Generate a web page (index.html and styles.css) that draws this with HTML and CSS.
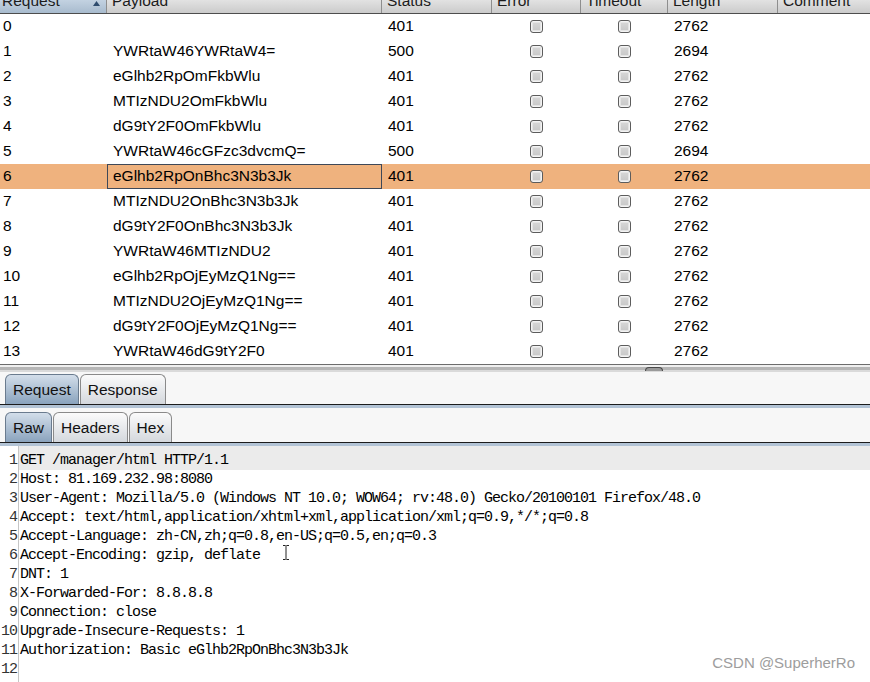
FILE: index.html
```html
<!DOCTYPE html>
<html>
<head>
<meta charset="utf-8">
<link rel="stylesheet" href="styles.css">
</head>
<body>
<div class="results">
  <div class="thead">
    <div class="th sorted first"><span class="th-label">Request</span><svg class="sort-arrow" width="7" height="5" viewBox="0 0 7 5"><path d="M0 5 L3.5 0 L7 5 Z" fill="#2f4c6e"/></svg></div>
    <div class="th"><span class="th-label">Payload</span></div>
    <div class="th"><span class="th-label">Status</span></div>
    <div class="th"><span class="th-label">Error</span></div>
    <div class="th"><span class="th-label">Timeout</span></div>
    <div class="th"><span class="th-label">Length</span></div>
    <div class="th last"><span class="th-label">Comment</span></div>
  </div>
  <div class="tbody">
    <div class="row"><div class="cell num">0</div><div class="cell"></div><div class="cell">401</div><div class="cell chk"><span class="box"></span></div><div class="cell chk"><span class="box"></span></div><div class="cell">2762</div><div class="cell"></div></div>
    <div class="row"><div class="cell num">1</div><div class="cell">YWRtaW46YWRtaW4=</div><div class="cell">500</div><div class="cell chk"><span class="box"></span></div><div class="cell chk"><span class="box"></span></div><div class="cell">2694</div><div class="cell"></div></div>
    <div class="row"><div class="cell num">2</div><div class="cell">eGlhb2RpOmFkbWlu</div><div class="cell">401</div><div class="cell chk"><span class="box"></span></div><div class="cell chk"><span class="box"></span></div><div class="cell">2762</div><div class="cell"></div></div>
    <div class="row"><div class="cell num">3</div><div class="cell">MTIzNDU2OmFkbWlu</div><div class="cell">401</div><div class="cell chk"><span class="box"></span></div><div class="cell chk"><span class="box"></span></div><div class="cell">2762</div><div class="cell"></div></div>
    <div class="row"><div class="cell num">4</div><div class="cell">dG9tY2F0OmFkbWlu</div><div class="cell">401</div><div class="cell chk"><span class="box"></span></div><div class="cell chk"><span class="box"></span></div><div class="cell">2762</div><div class="cell"></div></div>
    <div class="row"><div class="cell num">5</div><div class="cell">YWRtaW46cGFzc3dvcmQ=</div><div class="cell">500</div><div class="cell chk"><span class="box"></span></div><div class="cell chk"><span class="box"></span></div><div class="cell">2694</div><div class="cell"></div></div>
    <div class="row selected"><div class="cell num">6</div><div class="cell focus">eGlhb2RpOnBhc3N3b3Jk</div><div class="cell">401</div><div class="cell chk"><span class="box"></span></div><div class="cell chk"><span class="box"></span></div><div class="cell">2762</div><div class="cell"></div></div>
    <div class="row"><div class="cell num">7</div><div class="cell">MTIzNDU2OnBhc3N3b3Jk</div><div class="cell">401</div><div class="cell chk"><span class="box"></span></div><div class="cell chk"><span class="box"></span></div><div class="cell">2762</div><div class="cell"></div></div>
    <div class="row"><div class="cell num">8</div><div class="cell">dG9tY2F0OnBhc3N3b3Jk</div><div class="cell">401</div><div class="cell chk"><span class="box"></span></div><div class="cell chk"><span class="box"></span></div><div class="cell">2762</div><div class="cell"></div></div>
    <div class="row"><div class="cell num">9</div><div class="cell">YWRtaW46MTIzNDU2</div><div class="cell">401</div><div class="cell chk"><span class="box"></span></div><div class="cell chk"><span class="box"></span></div><div class="cell">2762</div><div class="cell"></div></div>
    <div class="row"><div class="cell num">10</div><div class="cell">eGlhb2RpOjEyMzQ1Ng==</div><div class="cell">401</div><div class="cell chk"><span class="box"></span></div><div class="cell chk"><span class="box"></span></div><div class="cell">2762</div><div class="cell"></div></div>
    <div class="row"><div class="cell num">11</div><div class="cell">MTIzNDU2OjEyMzQ1Ng==</div><div class="cell">401</div><div class="cell chk"><span class="box"></span></div><div class="cell chk"><span class="box"></span></div><div class="cell">2762</div><div class="cell"></div></div>
    <div class="row"><div class="cell num">12</div><div class="cell">dG9tY2F0OjEyMzQ1Ng==</div><div class="cell">401</div><div class="cell chk"><span class="box"></span></div><div class="cell chk"><span class="box"></span></div><div class="cell">2762</div><div class="cell"></div></div>
    <div class="row"><div class="cell num">13</div><div class="cell">YWRtaW46dG9tY2F0</div><div class="cell">401</div><div class="cell chk"><span class="box"></span></div><div class="cell chk"><span class="box"></span></div><div class="cell">2762</div><div class="cell"></div></div>
  </div>
</div>
<div class="splitter"><span class="grip"></span></div>
<div class="tabpanel">
  <div class="tabbar">
    <div class="tab active">Request</div>
    <div class="tab">Response</div>
  </div>
  <div class="tabrule"></div>
  <div class="tabbar second">
    <div class="tab active">Raw</div>
    <div class="tab">Headers</div>
    <div class="tab">Hex</div>
  </div>
  <div class="tabrule"></div>
</div>
<div class="editor">
  <div class="gutter">
    <div>1</div><div>2</div><div>3</div><div>4</div><div>5</div><div>6</div><div>7</div><div>8</div><div>9</div><div>10</div><div>11</div><div>12</div><div>13</div>
  </div>
  <div class="code">
    <div class="line current">GET /manager/html HTTP/1.1</div>
    <div class="line">Host: 81.169.232.98:8080</div>
    <div class="line">User-Agent: Mozilla/5.0 (Windows NT 10.0; WOW64; rv:48.0) Gecko/20100101 Firefox/48.0</div>
    <div class="line">Accept: text/html,application/xhtml+xml,application/xml;q=0.9,*/*;q=0.8</div>
    <div class="line">Accept-Language: zh-CN,zh;q=0.8,en-US;q=0.5,en;q=0.3</div>
    <div class="line">Accept-Encoding: gzip, deflate</div>
    <div class="line">DNT: 1</div>
    <div class="line">X-Forwarded-For: 8.8.8.8</div>
    <div class="line">Connection: close</div>
    <div class="line">Upgrade-Insecure-Requests: 1</div>
    <div class="line">Authorization: Basic eGlhb2RpOnBhc3N3b3Jk</div>
    <div class="line"></div>
    <div class="line"></div>
  </div>
</div>
<svg class="ibeam" width="8" height="17" viewBox="0 0 8 17"><path d="M1 1.5H3.5M4.5 1.5H7M4 1.5V15.5M1 15.5H3.5M4.5 15.5H7" stroke="#222" stroke-width="1" fill="none"/></svg>
<div class="watermark">CSDN @SuperherRo</div>
</body>
</html>
```
FILE: styles.css
```css
* { box-sizing: border-box; }
html, body { margin: 0; padding: 0; }
body {
  width: 870px;
  height: 682px;
  overflow: hidden;
  position: relative;
  background: #fff;
  color: #000;
  font-family: "Liberation Sans", Arial, sans-serif;
  font-size: 15.5px;
}

/* results table */
.thead, .row {
  display: grid;
  grid-template-columns: 107px 275px 110px 89px 87px 110px 92px;
}
.thead {
  height: 14px;
  border-bottom: 1px solid #4d4d4d;
  overflow: hidden;
}
.th {
  background: linear-gradient(#e2e2e2, #cbcbcb);
  border-right: 1px solid #8e8e8e;
  padding-left: 5px;
  overflow: hidden;
  display: flex;
  justify-content: space-between;
  align-items: flex-start;
}
.th.first { padding-left: 2px; }
.th.last { border-right: none; }
.th.sorted { background: linear-gradient(#c3d2e1, #a8bbce); }
.th-label {
  display: block;
  line-height: 18px;
  margin-top: -8px;
  color: #1c1c1c;
  white-space: nowrap;
}
.sort-arrow { margin: 1px 6px 0 0; flex: none; }

.row { height: 25px; line-height: 23px; }
.cell { padding-left: 6px; white-space: nowrap; overflow: hidden; }
.cell.num { padding-left: 3px; }
.cell.chk { padding: 0; display: flex; align-items: center; justify-content: center; }
.row.selected { background: #efb27e; }
.cell.focus { box-shadow: inset 0 0 0 1px #3e4858; }
.box {
  width: 13px;
  height: 13px;
  border: 1px solid #5c5c5c;
  border-radius: 3px;
  background: linear-gradient(#d8d8d8, #c6c6c6);
  box-shadow: inset 0 0 0 1px #f3f3f3, inset 0 0 0 2px #e4e4e4;
}

/* splitter */
.splitter {
  height: 8px;
  border-top: 1px solid #6c6c6c;
  background: linear-gradient(#f0f0f0 0 2px, #b6b6b6 2px 5px, #dadada 5px);
  display: flex;
}
.grip {
  margin: 2px 0 0 645px;
  width: 18px;
  height: 4px;
  border: 1px solid #4a4a4a;
  border-bottom: none;
  border-radius: 6px 6px 0 0;
  background: #9a9a9a;
}

/* tabs */
.tabpanel { background: #f7f7f7; }
.tabbar {
  display: flex;
  gap: 1px;
  padding: 2px 0 0 5px;
  border-bottom: 1px solid #1c1c1c;
}
.tabbar.second { margin-top: 4px; padding-top: 0; }
.tabrule { height: 3px; background: #b2c3d5; }
.tab {
  height: 30px;
  padding: 0 7px;
  display: flex;
  align-items: center;
  border: 1px solid #8a8a8a;
  border-bottom: none;
  border-radius: 6px 6px 0 0;
  background: linear-gradient(#fbfbfb, #d4d8dd);
  color: #111;
}
.tab.active {
  background: linear-gradient(#d3deea, #8aa3bd);
  border-color: #6a7b8e;
}

/* editor */
.editor {
  height: 237px;
  display: flex;
  overflow: hidden;
  background: #fff;
  font-family: "Liberation Mono", "Courier New", monospace;
  font-size: 15px;
  letter-spacing: -1px;
  line-height: 19px;
}
.gutter {
  width: 19px;
  flex: none;
  border-right: 1px solid #c6c6c6;
  text-align: right;
  padding: 5px 1px 0 0;
  color: #333;
}
.code { flex: 1; padding-left: 1px; }
.line { height: 19px; white-space: pre; }
.line.current {
  background: #ebebeb;
  margin-left: -1px;
  padding: 5px 0 0 1px;
  height: 24px;
}

/* overlays */
.ibeam { position: absolute; left: 282px; top: 544px; }
.watermark {
  position: absolute;
  right: 15px;
  bottom: 12px;
  font-family: "Liberation Sans", Arial, sans-serif;
  font-size: 15px;
  line-height: 15px;
  color: #9d9d9d;
}
```
